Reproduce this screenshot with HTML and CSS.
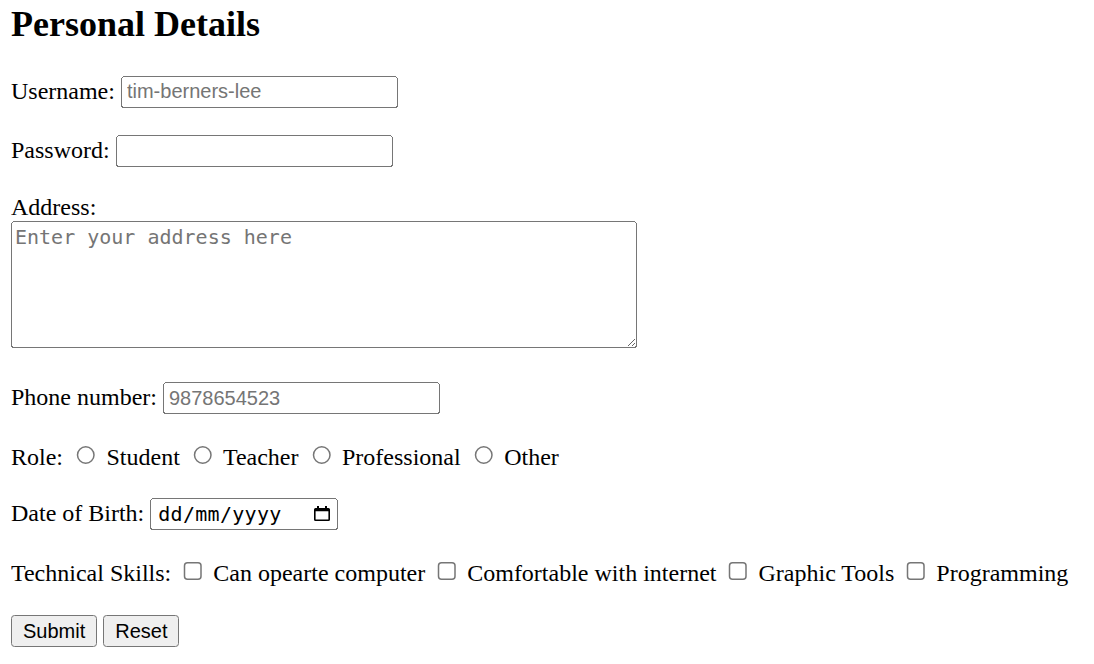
FILE: index.html
```html
<!DOCTYPE html>
<html>
<head>
<meta charset="utf-8">
<title>Personal Details</title>
<link rel="stylesheet" href="styles.css">
</head>
<body>
<h1 class="title">Personal Details</h1>
<form class="form">
<label for="user">Username:</label> <input class="text" type="text" id="user" placeholder="tim-berners-lee"><br><br>
<label for="pass">Password:</label> <input class="text" type="password" id="pass"><br><br>
<label for="addr">Address:</label><br>
<textarea class="area" id="addr" placeholder="Enter your address here"></textarea><br><br>
<label for="phone">Phone number:</label> <input class="text" type="tel" id="phone" placeholder="9878654523"><br><br>
Role: <input type="radio" name="role" id="r1"> <label for="r1">Student</label>
<input type="radio" name="role" id="r2"> <label for="r2">Teacher</label>
<input type="radio" name="role" id="r3"> <label for="r3">Professional</label>
<input type="radio" name="role" id="r4"> <label for="r4">Other</label><br><br>
<label for="dob">Date of Birth:</label> <span class="date-wrap"><input class="date" type="text" id="dob" placeholder="dd/mm/yyyy"><svg class="cal" viewBox="0 0 16 15" aria-hidden="true"><path d="M3 0h2v2h6V0h2v2h1.5A1.5 1.5 0 0 1 16 3.5v10A1.5 1.5 0 0 1 14.5 15h-13A1.5 1.5 0 0 1 0 13.5v-10A1.5 1.5 0 0 1 1.5 2H3zM1.6 5.2v8.2h12.8V5.2z" fill="#000" fill-rule="evenodd"/></svg></span><br><br>
Technical Skills: <input type="checkbox" id="c1"> <label for="c1">Can opearte computer</label>
<input type="checkbox" id="c2"> <label for="c2">Comfortable with internet</label>
<input type="checkbox" id="c3"> <label for="c3">Graphic Tools</label>
<input type="checkbox" id="c4"> <label for="c4">Programming</label><br><br>
<div class="actions"><input class="btn" type="submit" value="Submit"> <input class="btn" type="reset" value="Reset"></div>
</form>
</body>
</html>
```
FILE: styles.css
```css
html {
  zoom: 1.5;
}
body {
  margin: 0 7.33px;
  font-family: "Liberation Serif", "Times New Roman", serif;
  font-size: 16px;
  color: #000;
  background: #fff;
}
.title {
  font-size: 24px;
  margin: 0 0 20.6px;
  padding-top: 2px;
}
.text {
  font-family: "Liberation Sans", Arial, sans-serif;
}
.area {
  font-family: "DejaVu Sans Mono", monospace;
  width: 417.4px;
  height: 85px;
  box-sizing: border-box;
  margin-bottom: 0.6px;
}
.date-wrap {
  position: relative;
  display: inline-block;
}
.date {
  font-family: "DejaVu Sans Mono", monospace;
  font-size: 13.33px;
  letter-spacing: 0.2px;
  width: 125.33px;
  box-sizing: border-box;
  padding: 1px 2px 1px 3.3px;
  height: 21.33px;
}
.date::placeholder {
  color: #000;
  opacity: 1;
}
.cal {
  position: absolute;
  right: 5.4px;
  top: 5px;
  width: 10.67px;
  height: 10px;
  pointer-events: none;
}
.actions {
  padding-top: 0.8px;
}
.btn {
  font-family: "Liberation Sans", Arial, sans-serif;
}
```
